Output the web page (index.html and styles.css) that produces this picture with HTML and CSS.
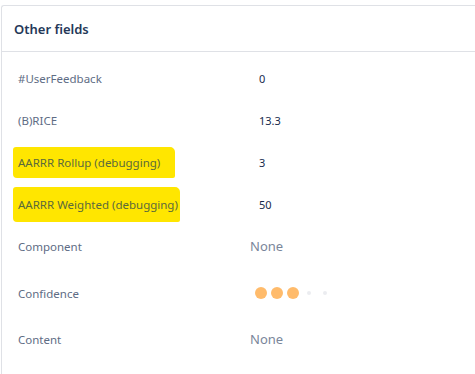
FILE: index.html
```html
<!DOCTYPE html>
<html>
<head>
  <title>Other fields</title>
  <link rel="stylesheet" href="styles.css">
</head>
<body>
  <div class="card">
    <div class="card-header">Other fields</div>
    <div class="fields">
      <div class="field">
        <div class="label">#UserFeedback</div>
        <div class="value num">0</div>
      </div>
      <div class="field">
        <div class="label">(B)RICE</div>
        <div class="value num">13.3</div>
      </div>
      <div class="field">
        <div class="label"><span class="hl hl-rollup">AARRR Rollup (debugging)</span></div>
        <div class="value num">3</div>
      </div>
      <div class="field">
        <div class="label"><span class="hl hl-weighted">AARRR Weighted (debugging)</span></div>
        <div class="value num">50</div>
      </div>
      <div class="field">
        <div class="label">Component</div>
        <div class="value none">None</div>
      </div>
      <div class="field tall">
        <div class="label">Confidence</div>
        <div class="value rating">
          <span class="dot on"></span>
          <span class="dot on"></span>
          <span class="dot on"></span>
          <span class="dot off"></span>
          <span class="dot off"></span>
        </div>
      </div>
      <div class="field last">
        <div class="label">Content</div>
        <div class="value none">None</div>
      </div>
    </div>
  </div>
</body>
</html>
```

FILE: styles.css
```css
body {
  margin: 0;
  padding: 0;
  background: #fff;
  font-family: "Noto Sans", "Open Sans", sans-serif;
  overflow: hidden;
}

/* card is cut off on the right and bottom in the shot */
.card {
  box-sizing: border-box;
  margin: 5px 0 0 1px;
  width: calc(100% - 1px);
  height: calc(100vh - 5px);
  border: 1px solid #dfe1e6;
  border-right: none;
  border-bottom: none;
  border-radius: 3px 0 0 0;
}

.card-header {
  height: 46px;
  box-sizing: border-box;
  padding: 0 0 0 12px;
  display: flex;
  align-items: center;
  border-bottom: 1px solid #dfe1e6;
  font-size: 13px;
  font-weight: 600;
  color: #253858;
}

.fields {
  padding-top: 5px;
}

.field {
  display: grid;
  grid-template-columns: 248px 1fr;
  align-items: center;
  height: 42px;
}

.field.tall {
  height: 52px;
}

.field.last {
  height: 40px;
}

.label {
  padding-left: 16px;
  font-size: 11.5px;
  color: #5e6c84;
}

.hl {
  display: inline-block;
  background: #ffe600;
  color: #5b6a3c;
  margin: -8px 0 -8px -5px;
  padding: 8px 15px 8px 5px;
  border-radius: 3px 5px 2px 4px;
}

.hl-weighted {
  margin: -10px 0 -10px -5px;
  padding: 10px 2px 10px 5px;
}

.value.num {
  padding-left: 9px;
  font-size: 11px;
  color: #172b4d;
}

.value.none {
  font-size: 13px;
  color: #7a869a;
}

.rating {
  display: flex;
  align-items: center;
  gap: 4px;
  padding-left: 5px;
}

.dot {
  width: 12px;
  height: 12px;
  display: flex;
  align-items: center;
  justify-content: center;
}

.dot::after {
  content: "";
  border-radius: 50%;
}

.dot.on::after {
  width: 12px;
  height: 12px;
  background: #ffbb6b;
}

.dot.off::after {
  width: 4px;
  height: 4px;
  background: #ebecf0;
}
```
